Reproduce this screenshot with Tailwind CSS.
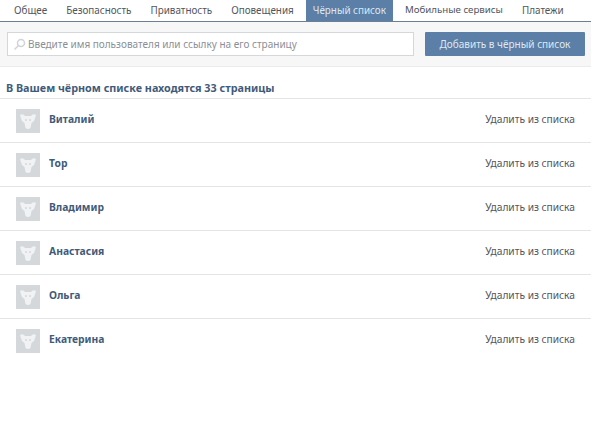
<!DOCTYPE html>
<html lang="ru">

<head>
  <meta charset="UTF-8">
  <title>Чёрный список</title>
  <script src="https://cdn.jsdelivr.net/npm/@tailwindcss/browser@4"></script>
</head>

<body class="bg-white font-['Noto_Sans',sans-serif] text-[9.9px] text-[#51565c] w-[600px] h-[428px] overflow-hidden">
  <div class="w-[591px]">
    <!-- tabs -->
    <nav class="flex h-[22px] pl-[7px] gap-[5px] border-b border-[#6d7f93] items-stretch whitespace-nowrap">
      <a class="px-[7px] leading-[20px]">Общее</a>
      <a class="px-[7px] leading-[20px]">Безопасность</a>
      <a class="px-[7px] leading-[20px]">Приватность</a>
      <a class="px-[7px] leading-[20px]">Оповещения</a>
      <a class="px-[7px] leading-[20px] bg-[#5b7fa6] text-[#dfe7f0]">Чёрный список</a>
      <a class="px-[7px] leading-[20px] text-[9.7px]">Мобильные сервисы</a>
      <a class="px-[7px] leading-[20px]">Платежи</a>
    </nav>

    <!-- search -->
    <div class="flex items-center h-[45px] pl-[7px] pr-[6px] gap-[11px] bg-[#f7f7f7] border-b border-[#ececec]">
      <div class="flex items-center w-[407px] h-[24px] bg-white border border-[#d5d8db] pl-[5px] gap-[2px] text-[#8b9097]">
        <svg width="13" height="13" viewBox="0 0 13 13" fill="none" stroke="#d0d4d9" stroke-width="1.5">
          <circle cx="8" cy="5" r="3.5" />
          <path d="M5.5 7.5 L1.5 11.5" />
        </svg>
        <span class="text-[10px]">Введите имя пользователя или ссылку на его страницу</span>
      </div>
      <button class="w-[160px] h-[24px] bg-[#5b7fa6] text-[#dfe7f0] text-[10px] rounded-[1px]">Добавить в чёрный список</button>
    </div>

    <!-- list -->
    <h2 class="pl-[6px] pt-[13px] h-[32px] leading-[16px] font-bold text-[10.8px] text-[#3f5b7a] border-b border-[#e2e4e6]">В Вашем чёрном списке находятся 33 страницы</h2>

    <div id="list">
      <div class="flex items-center justify-between h-[44px] pl-[16px] pr-[16px] border-b border-[#e2e4e6]">
        <div class="flex items-center gap-[9px]">
          <svg class="block" width="24" height="24" viewBox="0 0 24 24"><rect width="24" height="24" fill="#d5d8db" /><path d="M4 6 Q7 4 9 7 H15 Q17 4 20 6 L18 12 L15.5 14 L14.5 19 Q12 21 9.5 19 L8.5 14 L6 12 Z" fill="#f1f2f3" /><circle cx="10" cy="11" r="1" fill="#d5d8db" /><circle cx="14" cy="11" r="1" fill="#d5d8db" /></svg>
          <span class="pb-[2px] font-bold text-[10.3px] text-[#3f5b7a]">Виталий</span>
        </div>
        <a class="pb-[2px] text-[10.2px]">Удалить из списка</a>
      </div>
      <div class="flex items-center justify-between h-[44px] pl-[16px] pr-[16px] border-b border-[#e2e4e6]">
        <div class="flex items-center gap-[9px]">
          <svg class="block" width="24" height="24" viewBox="0 0 24 24"><rect width="24" height="24" fill="#d5d8db" /><path d="M4 6 Q7 4 9 7 H15 Q17 4 20 6 L18 12 L15.5 14 L14.5 19 Q12 21 9.5 19 L8.5 14 L6 12 Z" fill="#f1f2f3" /><circle cx="10" cy="11" r="1" fill="#d5d8db" /><circle cx="14" cy="11" r="1" fill="#d5d8db" /></svg>
          <span class="pb-[2px] font-bold text-[10.3px] text-[#3f5b7a]">Тор</span>
        </div>
        <a class="pb-[2px] text-[10.2px]">Удалить из списка</a>
      </div>
      <div class="flex items-center justify-between h-[44px] pl-[16px] pr-[16px] border-b border-[#e2e4e6]">
        <div class="flex items-center gap-[9px]">
          <svg class="block" width="24" height="24" viewBox="0 0 24 24"><rect width="24" height="24" fill="#d5d8db" /><path d="M4 6 Q7 4 9 7 H15 Q17 4 20 6 L18 12 L15.5 14 L14.5 19 Q12 21 9.5 19 L8.5 14 L6 12 Z" fill="#f1f2f3" /><circle cx="10" cy="11" r="1" fill="#d5d8db" /><circle cx="14" cy="11" r="1" fill="#d5d8db" /></svg>
          <span class="pb-[2px] font-bold text-[10.3px] text-[#3f5b7a]">Владимир</span>
        </div>
        <a class="pb-[2px] text-[10.2px]">Удалить из списка</a>
      </div>
      <div class="flex items-center justify-between h-[44px] pl-[16px] pr-[16px] border-b border-[#e2e4e6]">
        <div class="flex items-center gap-[9px]">
          <svg class="block" width="24" height="24" viewBox="0 0 24 24"><rect width="24" height="24" fill="#d5d8db" /><path d="M4 6 Q7 4 9 7 H15 Q17 4 20 6 L18 12 L15.5 14 L14.5 19 Q12 21 9.5 19 L8.5 14 L6 12 Z" fill="#f1f2f3" /><circle cx="10" cy="11" r="1" fill="#d5d8db" /><circle cx="14" cy="11" r="1" fill="#d5d8db" /></svg>
          <span class="pb-[2px] font-bold text-[10.3px] text-[#3f5b7a]">Анастасия</span>
        </div>
        <a class="pb-[2px] text-[10.2px]">Удалить из списка</a>
      </div>
      <div class="flex items-center justify-between h-[44px] pl-[16px] pr-[16px] border-b border-[#e2e4e6]">
        <div class="flex items-center gap-[9px]">
          <svg class="block" width="24" height="24" viewBox="0 0 24 24"><rect width="24" height="24" fill="#d5d8db" /><path d="M4 6 Q7 4 9 7 H15 Q17 4 20 6 L18 12 L15.5 14 L14.5 19 Q12 21 9.5 19 L8.5 14 L6 12 Z" fill="#f1f2f3" /><circle cx="10" cy="11" r="1" fill="#d5d8db" /><circle cx="14" cy="11" r="1" fill="#d5d8db" /></svg>
          <span class="pb-[2px] font-bold text-[10.3px] text-[#3f5b7a]">Ольга</span>
        </div>
        <a class="pb-[2px] text-[10.2px]">Удалить из списка</a>
      </div>
      <div class="flex items-center justify-between h-[44px] pl-[16px] pr-[16px]">
        <div class="flex items-center gap-[9px]">
          <svg class="block" width="24" height="24" viewBox="0 0 24 24"><rect width="24" height="24" fill="#d5d8db" /><path d="M4 6 Q7 4 9 7 H15 Q17 4 20 6 L18 12 L15.5 14 L14.5 19 Q12 21 9.5 19 L8.5 14 L6 12 Z" fill="#f1f2f3" /><circle cx="10" cy="11" r="1" fill="#d5d8db" /><circle cx="14" cy="11" r="1" fill="#d5d8db" /></svg>
          <span class="pb-[2px] font-bold text-[10.3px] text-[#3f5b7a]">Екатерина</span>
        </div>
        <a class="pb-[2px] text-[10.2px]">Удалить из списка</a>
      </div>
    </div>
  </div>
</body>

</html>
